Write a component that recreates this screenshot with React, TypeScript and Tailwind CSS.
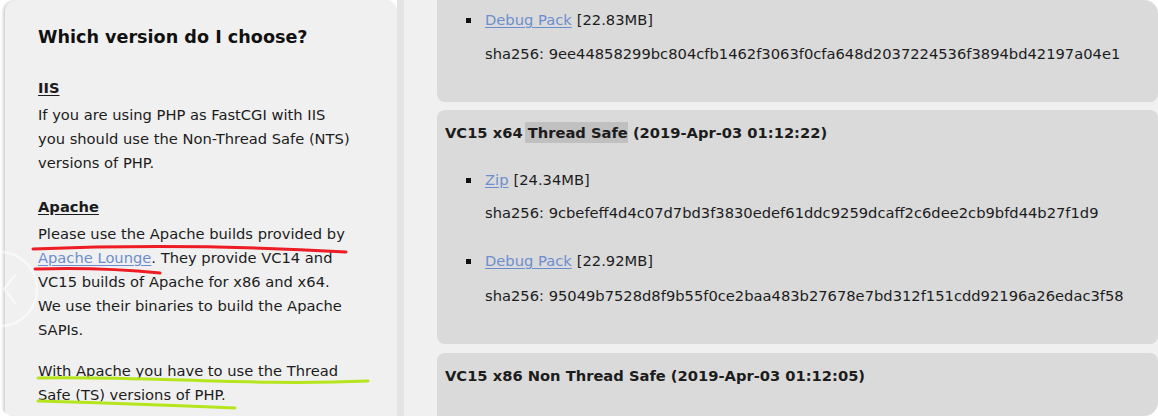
const font = "font-['DejaVu_Sans',sans-serif]"

function Bullet({ label, size }: { label: string; size: string }) {
  return (
    <div className="flex h-[24px] items-center">
      <span className="ml-[21px] mr-[14px] h-[5px] w-[5px] bg-[#111]" />
      <a className="text-[#6c8ecf] underline decoration-1 underline-offset-2">{label}</a>
      <span className="ml-[5px]">[{size}]</span>
    </div>
  )
}

function Sha({ hash, className = '' }: { hash: string; className?: string }) {
  return <div className={`ml-[40px] h-[24px] leading-[24px] ${className}`}>sha256: {hash}</div>
}

export default function App() {
  return (
    <div className={`relative flex h-[416px] w-[1158px] overflow-hidden rounded-[14px] bg-white text-[14.7px] text-[#1c1c1c] ${font}`}>
      <div className="w-[5px] shrink-0 bg-white" />

      {/* sidebar */}
      <div className="w-[392px] shrink-0 rounded-t-[12px] bg-[#f0f0f0] pl-[33px] pt-[25px] leading-[24px] shadow-[-2px_0_3px_rgba(0,0,0,0.18)]">
        <h3 className="text-[17.6px] font-bold text-[#111]">Which version do I choose?</h3>
        <div className="mt-[27px] font-bold underline underline-offset-2">IIS</div>
        <p className="mt-[3px]">
          If you are using PHP as FastCGI with IIS
          <br />
          you should use the Non-Thread Safe (NTS)
          <br />
          versions of PHP.
        </p>
        <div className="mt-[20px] font-bold underline underline-offset-2">Apache</div>
        <p className="mt-[3px]">
          Please use the Apache builds provided by
          <br />
          <a className="text-[#6c8ecf] underline decoration-1 underline-offset-2">Apache Lounge</a>. They provide VC14 and
          <br />
          VC15 builds of Apache for x86 and x64.
          <br />
          We use their binaries to build the Apache
          <br />
          SAPIs.
        </p>
        <p className="mt-[17px]">
          With Apache you have to use the Thread
          <br />
          Safe (TS) versions of PHP.
        </p>
      </div>

      <div className="w-[7px] shrink-0 bg-[#e4e4e4]" />
      <div className="w-[33px] shrink-0 bg-[#f0f0f0]" />

      {/* downloads */}
      <div className="flex flex-1 flex-col bg-[#f0f0f0]">
        <div className="h-[102px] shrink-0 rounded-b-[8px] bg-[#dadada] pl-[8px] pt-[8px]">
          <Bullet label="Debug Pack" size="22.83MB" />
          <Sha className="mt-[10px]" hash="9ee44858299bc804cfb1462f3063f0cfa648d2037224536f3894bd42197a04e1" />
        </div>

        <div className="mt-[8px] h-[234px] shrink-0 rounded-[8px] bg-[#dadada] pl-[8px] pt-[11px]">
          <h3 className="h-[24px] font-bold leading-[24px]">
            VC15 x64 <span className="-ml-[3px] bg-[#c0c0c0] py-[2px] pl-[3px]">Thread Safe</span> (2019-Apr-03 01:12:22)
          </h3>
          <div className="mt-[23px]">
            <Bullet label="Zip" size="24.34MB" />
          </div>
          <Sha className="mt-[9px]" hash="9cbefeff4d4c07d7bd3f3830edef61ddc9259dcaff2c6dee2cb9bfd44b27f1d9" />
          <div className="mt-[24px]">
            <Bullet label="Debug Pack" size="22.92MB" />
          </div>
          <Sha className="mt-[11px]" hash="95049b7528d8f9b55f0ce2baa483b27678e7bd312f151cdd92196a26edac3f58" />
        </div>

        <div className="mt-[9px] h-[120px] shrink-0 rounded-[8px] bg-[#dadada] pl-[8px] pt-[11px]">
          <h3 className="h-[24px] font-bold leading-[24px]">VC15 x86 Non Thread Safe (2019-Apr-03 01:12:05)</h3>
          <div className="mt-[23px]">
            <Bullet label="Zip" size="23.72MB" />
          </div>
        </div>
      </div>

      {/* hand-drawn marks and carousel ghost over the page */}
      <svg className="pointer-events-none absolute inset-0" width="1158" height="416" fill="none">
        <circle cx="0" cy="289" r="37" stroke="white" strokeOpacity="0.5" strokeWidth="2.5" />
        <path d="M16 274 L4 289 L16 304" stroke="white" strokeOpacity="0.5" strokeWidth="2.5" />
        <path d="M33 249 Q190 243 346 252" stroke="#ee1c24" strokeWidth="3" strokeLinecap="round" />
        <path d="M35 269 Q100 267 160 273" stroke="#ee1c24" strokeWidth="3" strokeLinecap="round" />
        <path d="M38 378 C150 376 250 386 368 381" stroke="#b5e61d" strokeWidth="3" strokeLinecap="round" />
        <path d="M38 401 Q140 404 235 408" stroke="#b5e61d" strokeWidth="3" strokeLinecap="round" />
      </svg>
    </div>
  )
}
